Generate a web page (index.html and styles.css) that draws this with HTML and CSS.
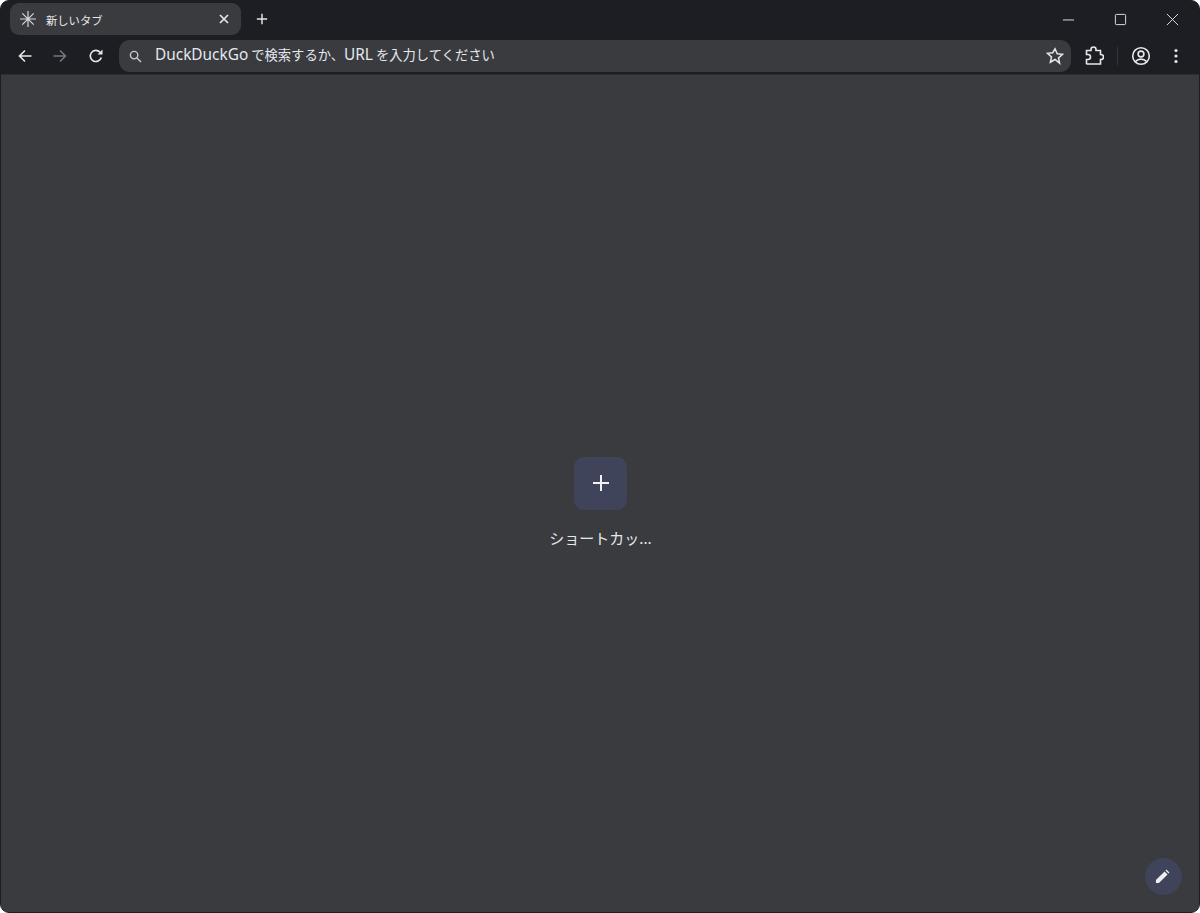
FILE: index.html
```html
<!DOCTYPE html>
<html lang="ja">
<head>
<meta charset="utf-8">
<title>新しいタブ</title>
<link rel="stylesheet" href="styles.css">
</head>
<body>
<div class="window">
  <header class="titlebar">
    <div class="tab">
      <svg class="tab-favicon" viewBox="0 0 18 18"><path d="M9 1v16M1 9h16M3.300 3.300l11.400 11.400M14.700 3.300L3.300 14.700"/></svg>
      <span class="tab-title">新しいタブ</span>
      <svg class="tab-close" viewBox="0 0 10 10"><path d="M1 1l8 8M9 1L1 9"/></svg>
    </div>
    <svg class="new-tab" viewBox="0 0 14 14"><path d="M7 1v12M1 7h12"/></svg>
    <div class="caption">
      <svg class="cap-btn" viewBox="0 0 14 14"><path d="M1 7.500h12"/></svg>
      <svg class="cap-btn" viewBox="0 0 14 14"><rect x="1.500" y="1.500" width="11" height="11" rx="1"/></svg>
      <svg class="cap-btn" viewBox="0 0 14 14"><path d="M1 1l12 12M13 1L1 13"/></svg>
    </div>
  </header>
  <nav class="toolbar">
    <svg class="nav-icon" viewBox="0 0 16 16"><path d="M14.500 8H2.500M8 2.500L2.500 8 8 13.500"/></svg>
    <svg class="nav-icon dim" viewBox="0 0 16 16"><path d="M1.500 8h12M8 2.500L13.500 8 8 13.500"/></svg>
    <svg class="nav-icon" viewBox="0 0 16 16"><path d="M13.300 9.500A5.600 5.600 0 1 1 12 4.100"/><path class="solid" d="M14.500 1.500v5h-5z"/></svg>
    <div class="omnibox">
      <svg class="search" viewBox="0 0 14 14"><circle cx="5.500" cy="5.500" r="4"/><path d="M8.500 8.500l4.500 4.500"/></svg>
      <span class="omni-text"><span class="latin">DuckDuckGo</span> で検索するか、<span class="latin">URL</span> を入力してください</span>
      <svg class="star" viewBox="0 0 18 18"><path d="M9 1.800l2.200 4.900 5.300.6-4 3.600 1.100 5.300L9 12.500l-4.600 2.700 1.100-5.300-4-3.600 5.300-.6z"/></svg>
    </div>
    <svg class="ext" viewBox="0 0 20 20"><path d="M2.500 4.500H7V3.500a2.500 2.500 0 0 1 5 0v1h4.500v4h.5a2.500 2.500 0 0 1 0 5h-.5V18H3l-.5-.5v-4H4a2.500 2.500 0 0 0 0-5H2.500z"/></svg>
    <span class="divider"></span>
    <svg class="profile" viewBox="0 0 20 20"><circle cx="10" cy="10" r="8.300"/><circle cx="10" cy="8" r="2.900"/><path d="M4.500 15.500c1.500-1.700 3.400-2.400 5.500-2.400s4 .7 5.500 2.400"/></svg>
    <svg class="menu" viewBox="0 0 4 16"><circle cx="2" cy="2.500" r="1.600"/><circle cx="2" cy="8" r="1.600"/><circle cx="2" cy="13.500" r="1.600"/></svg>
  </nav>
  <main class="content">
    <div class="shortcut">
      <div class="shortcut-tile">
        <svg class="shortcut-plus" viewBox="0 0 16 16"><path d="M8 0v16M0 8h16"/></svg>
      </div>
      <span class="shortcut-label">ショートカッ...</span>
    </div>
    <div class="customize">
      <svg class="pencil" viewBox="0 0 16 16"><path d="M1 15v-3.200L10.200 2.600l3.200 3.200L4.200 15zM11.200 1.600l1-1 3.200 3.200-1 1z"/></svg>
    </div>
  </main>
</div>
</body>
</html>
```
FILE: styles.css
```css
* { box-sizing: border-box; }
html, body { margin: 0; height: 100%; background: #fff; overflow: hidden; }
body { font-family: "Noto Sans CJK JP", "Noto Sans", sans-serif; }
.window {
  width: 1200px;
  height: 913px;
  display: flex;
  flex-direction: column;
  border: 1px solid #1d1e23;
  border-radius: 9px;
  overflow: hidden;
  background: #3a3b3f;
}
svg { display: block; flex: none; fill: none; stroke: #e6e7e9; stroke-width: 1.6; }
.titlebar {
  height: 39px;
  flex: none;
  display: flex;
  align-items: flex-start;
  background: #1d1e23;
  padding: 2px 0 0 9px;
}
.tab {
  width: 231px;
  height: 32px;
  display: flex;
  align-items: center;
  background: #3a3b3f;
  border-radius: 9px;
  padding: 0 12px 0 9px;
}
.tab-favicon { width: 18px; height: 18px; stroke: #d8d9db; stroke-width: 1.2; }
.tab-title { flex: 1; margin: 2px 0 0 9px; font-size: 11.300px; line-height: 16px; color: #e8e9ea; }
.tab-close { width: 10px; height: 10px; stroke-width: 1.7; }
.new-tab { width: 12px; height: 12px; margin: 10px 0 0 15px; stroke-width: 1.7; }
.caption {
  margin-left: auto;
  display: flex;
  gap: 39px;
  padding: 10px 20px 0 0;
}
.cap-btn { width: 13px; height: 13px; stroke-width: 1; }
.toolbar {
  height: 34px;
  flex: none;
  display: flex;
  align-items: center;
  background: #1d1e23;
  padding: 0 0 2px 16px;
}
.nav-icon { width: 16px; height: 16px; margin-right: 19px; }
.nav-icon.dim { stroke: #75767a; margin-right: 20px; }
.solid { fill: #e6e7e9; stroke: none; }
.omnibox {
  width: 952px;
  height: 32px;
  margin-left: -4px;
  display: flex;
  align-items: center;
  background: #3a3b3f;
  border-radius: 11px;
  padding: 0 7px 0 10px;
}
.search { width: 13px; height: 13px; stroke: #c8c9cb; stroke-width: 1.5; }
.omni-text { flex: 1; margin: 0 0 3px 13px; font-size: 13.300px; line-height: 20px; color: #e4e8ef; white-space: nowrap; }
.latin { font-family: "Noto Sans", sans-serif; font-size: 15.400px; }
.star { width: 18px; height: 18px; stroke-width: 1.5; }
.ext { width: 20px; height: 20px; margin-left: 13px; stroke-width: 1.600; }
.divider { width: 1px; height: 18px; margin-left: 13px; background: #34353a; }
.profile { width: 20px; height: 20px; margin-left: 13px; stroke-width: 1.600; }
.menu { width: 4px; height: 16px; margin-left: 23px; fill: #e6e7e9; stroke: none; }
.content {
  flex: 1;
  position: relative;
  display: flex;
  justify-content: center;
  padding-top: 382px;
  border-top: 1px solid #2c2d31;
}
.shortcut {
  width: 112px;
  margin-left: 1px;
  display: flex;
  flex-direction: column;
  align-items: center;
}
.shortcut-tile {
  width: 53px;
  height: 53px;
  display: flex;
  align-items: center;
  justify-content: center;
  background: #40445a;
  border-radius: 10px;
  padding-bottom: 2px;
}
.shortcut-plus { width: 16px; height: 16px; stroke: #f2f2f3; stroke-width: 2; }
.shortcut-label { margin-top: 18px; font-size: 15px; line-height: 20px; color: #e6e7e9; white-space: nowrap; }
.customize {
  position: absolute;
  right: 17px;
  bottom: 17px;
  width: 37px;
  height: 37px;
  display: flex;
  align-items: center;
  justify-content: center;
  background: #40445a;
  border-radius: 50%;
  padding-right: 2px;
}
.pencil { width: 15px; height: 15px; fill: #eeeef0; stroke: none; }
```
